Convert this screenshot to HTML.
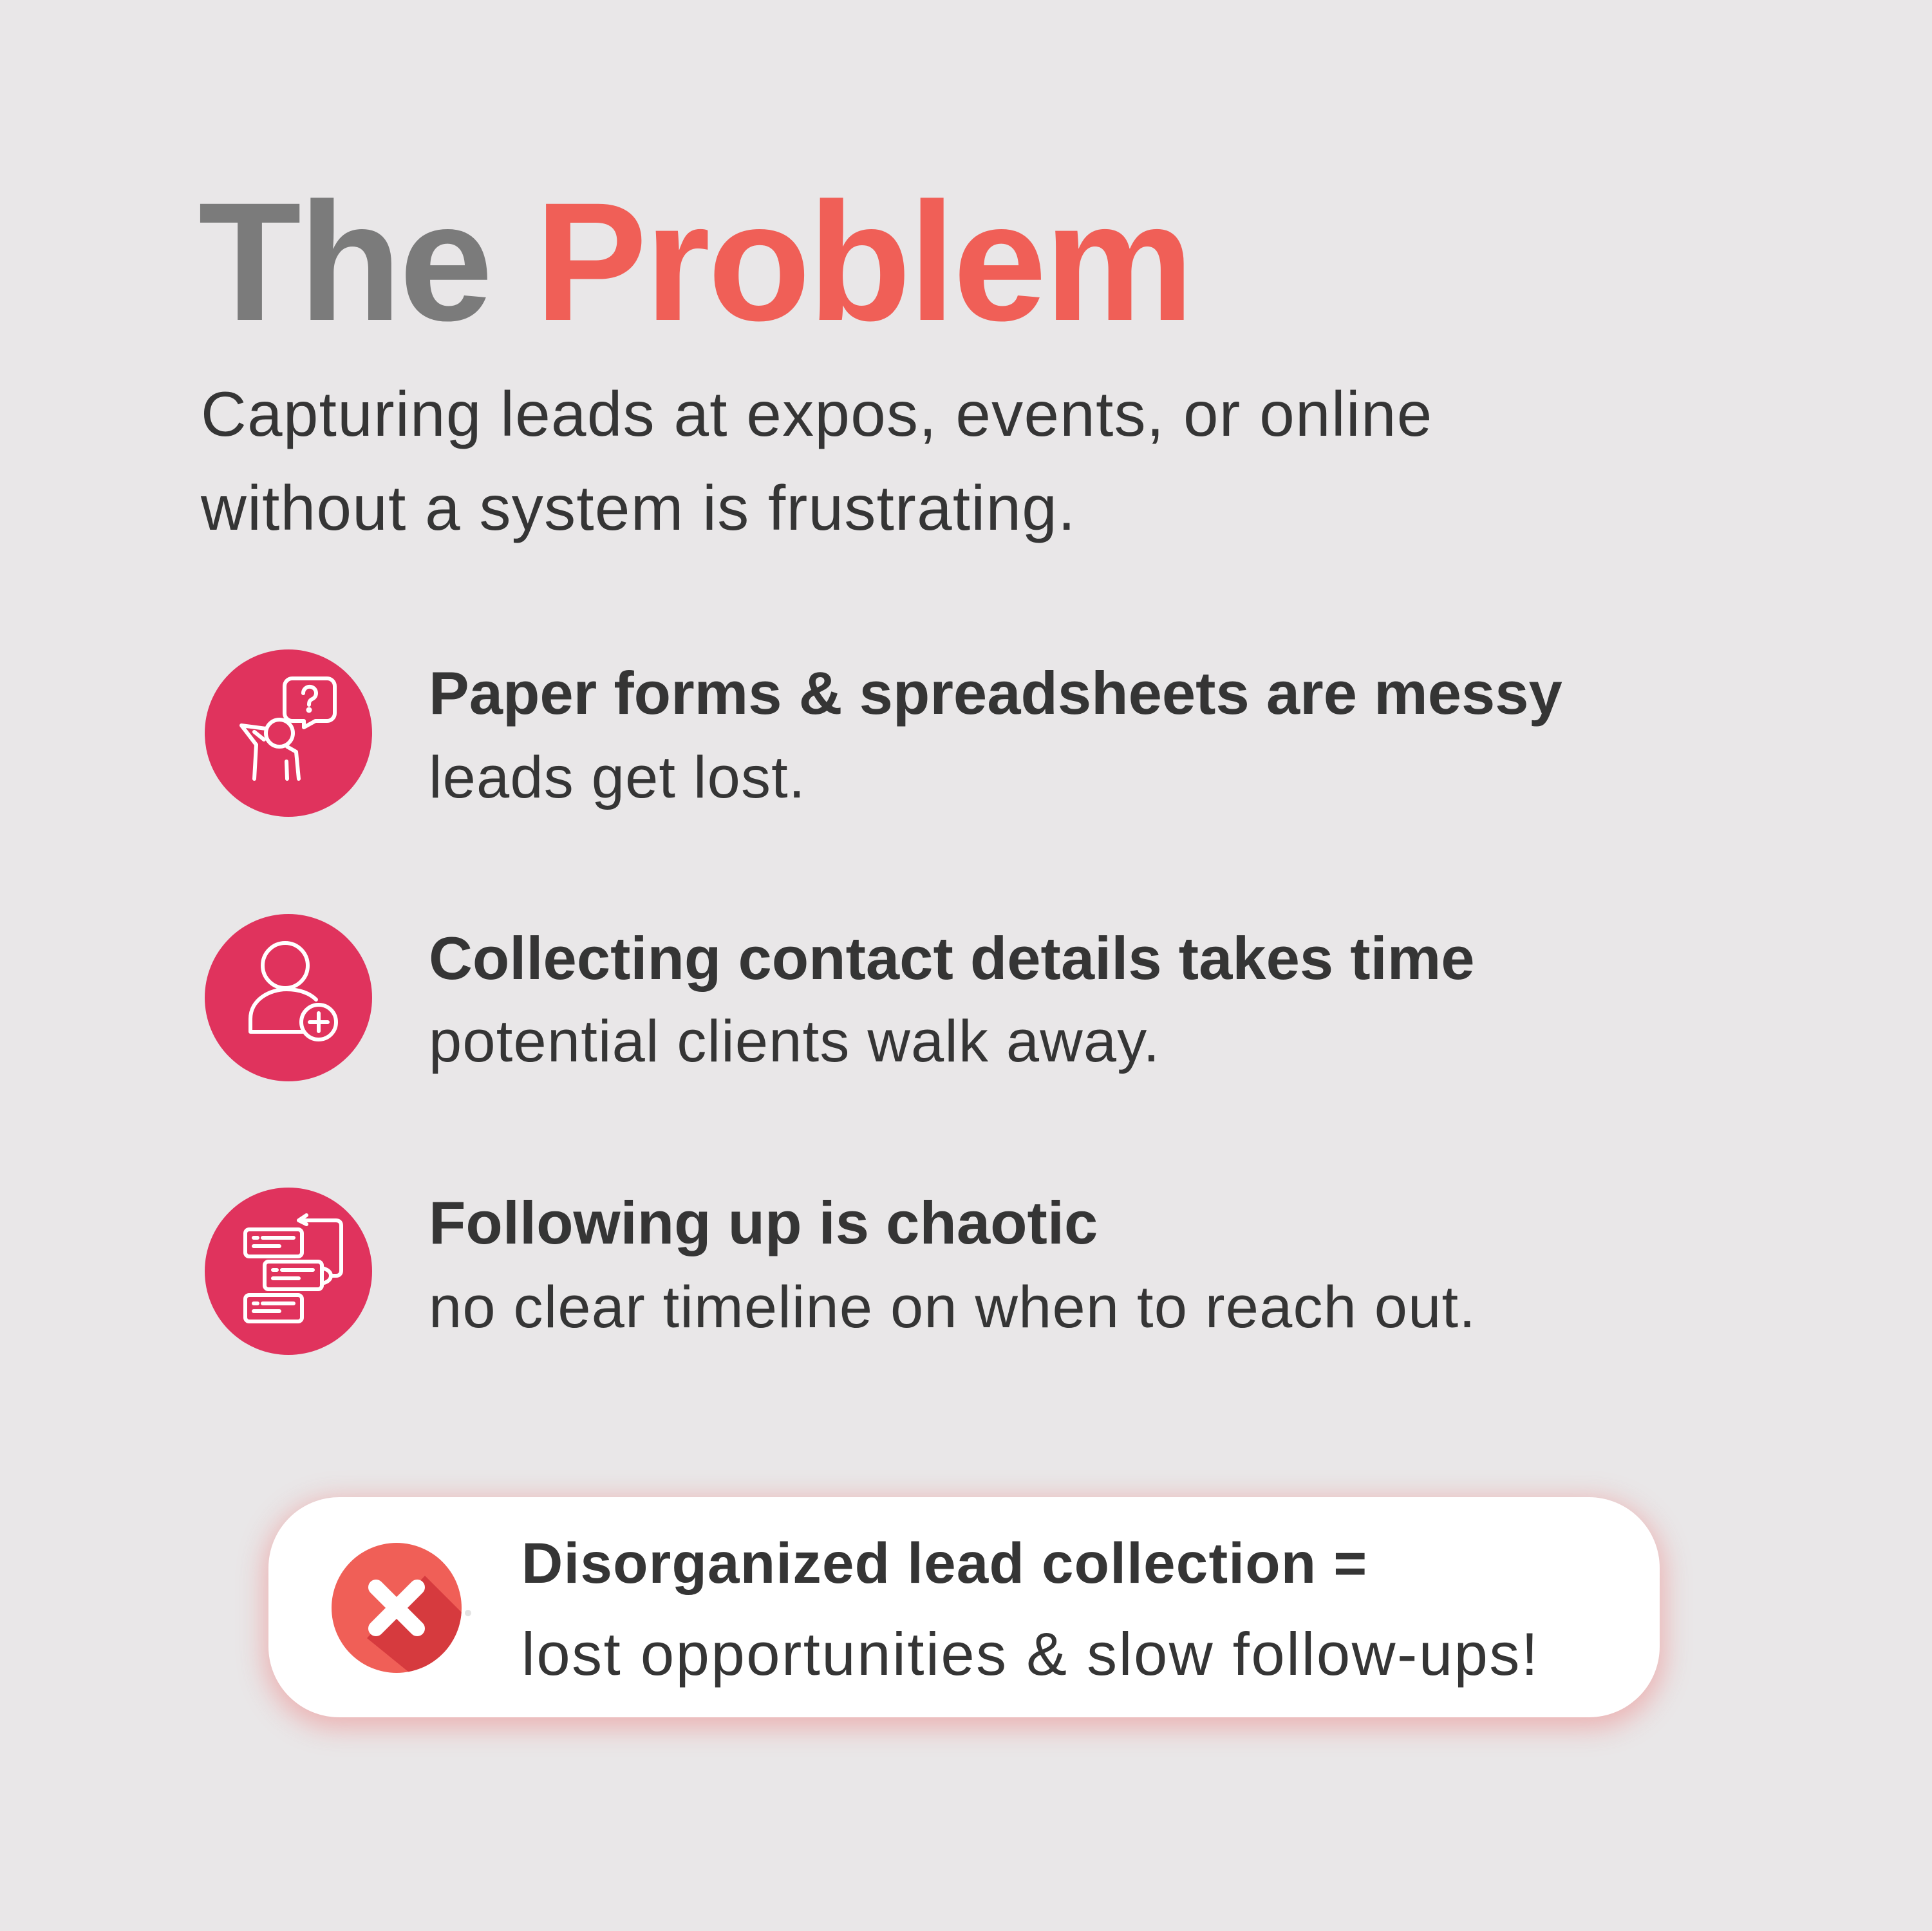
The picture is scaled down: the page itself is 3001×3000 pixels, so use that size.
<!DOCTYPE html>
<html><head><meta charset="utf-8"><style>
html,body{margin:0;padding:0}
body{width:3001px;height:3000px;background:#e9e7e8;position:relative;overflow:hidden;font-family:"Liberation Sans",sans-serif;color:#353535}
.t{position:absolute;white-space:nowrap;line-height:1}
.c{position:absolute;width:260px;height:260px;border-radius:50%;background:#e0335d;left:318px}
.c svg{position:absolute;left:0;top:0}
.h{font-size:94px;font-weight:bold}
.s{font-size:92px;letter-spacing:1.2px}
</style></head><body>
<div class="t" style="left:308px;top:276px;font-size:262px;font-weight:bold;letter-spacing:-4px"><span style="color:#7b7b7b">The</span> <span style="color:#f05f57">Problem</span></div>
<div class="t" style="left:312px;top:594px;font-size:98px;letter-spacing:1.3px">Capturing leads at expos, events, or online</div>
<div class="t" style="left:312px;top:740px;font-size:98px;letter-spacing:1.3px">without a system is frustrating.</div>

<div class="c" style="top:1009px"><svg width="260" height="260" viewBox="318 1009 260 260" fill="none" stroke="#fff" stroke-width="6" stroke-linecap="round" stroke-linejoin="round">
<path d="M454 1054h54a12 12 0 0 1 12 12v42a12 12 0 0 1-12 12h-18l-18 10v-10h-18a12 12 0 0 1-12-12v-42a12 12 0 0 1 12-12z"/>
<path d="M471 1077a10 10 0 1 1 14 9c-4 2-5 4-5 9"/><circle cx="480" cy="1103" r="1.5" fill="#fff"/>
<circle cx="434" cy="1139" r="21"/>
<path d="M413 1132l-38-5l23 30l-3 53"/><path d="M395 1137l15 12"/>
<path d="M446 1160l14 8l4 42"/><path d="M445 1183l1 27"/>
</svg></div>

<div class="c" style="top:1420px"><svg width="260" height="260" viewBox="318 1420 260 260" fill="none" stroke="#fff" stroke-width="6" stroke-linecap="round" stroke-linejoin="round">
<circle cx="443" cy="1500" r="35"/>
<path d="M470 1603h-81v-20c0-30 30-46 56-46c20 0 36 6 46 16"/>
<circle cx="495" cy="1588" r="27"/><path d="M495 1574v28M481 1588h28"/>
</svg></div>

<div class="c" style="top:1845px"><svg width="260" height="260" viewBox="318 1845 260 260" fill="none" stroke="#fff" stroke-width="6" stroke-linecap="round" stroke-linejoin="round">
<rect x="381" y="1910" width="88" height="42" rx="6"/><path d="M394 1923h6M408 1923h48M394 1936h40"/>
<rect x="411" y="1960" width="89" height="43" rx="6"/><path d="M424 1973h6M438 1973h48M424 1986h40"/>
<rect x="381" y="2012" width="88" height="41" rx="6"/><path d="M394 2025h6M408 2025h48M394 2037h40"/>
<path d="M500 1970c10 2 14 7 14 12s-4 10-14 12"/>
<path d="M514 1982h8c5 0 8-3 8-8v-70c0-5-3-8-8-8h-56"/><path d="M476 1888l-12 8l12 6"/>
</svg></div>

<div class="t h" style="left:666px;top:1030px">Paper forms &amp; spreadsheets are messy</div>
<div class="t s" style="left:666px;top:1162px">leads get lost.</div>
<div class="t h" style="left:666px;top:1442px">Collecting contact details takes time</div>
<div class="t s" style="left:666px;top:1572px">potential clients walk away.</div>
<div class="t h" style="left:666px;top:1853px">Following up is chaotic</div>
<div class="t s" style="left:666px;top:1985px">no clear timeline on when to reach out.</div>

<div style="position:absolute;left:417px;top:2326px;width:2161px;height:342px;border-radius:110px;background:#fff;box-shadow:0 10px 40px 8px rgba(240,120,120,.45)"></div>
<svg style="position:absolute;left:505px;top:2387px" width="240" height="230" viewBox="505 2387 240 230">
<defs><clipPath id="cc"><circle cx="616" cy="2498" r="101"/></clipPath></defs>
<circle cx="616" cy="2498" r="101" fill="#f05f57"/>
<path clip-path="url(#cc)" d="M660 2448L740 2528L650 2610L570 2545Z" fill="#d63a3e"/>
<path d="M584 2466L648 2530M648 2466L584 2530" stroke="#fff" stroke-width="24" stroke-linecap="round"/>
<circle cx="727" cy="2506" r="5" fill="#e3e3e3"/>
</svg>
<div class="t" style="left:810px;top:2384px;font-size:89px;font-weight:bold;letter-spacing:1.2px">Disorganized lead collection =</div>
<div class="t" style="left:810px;top:2523px;font-size:94px;letter-spacing:2.5px">lost opportunities &amp; slow follow-ups!</div>
</body></html>
